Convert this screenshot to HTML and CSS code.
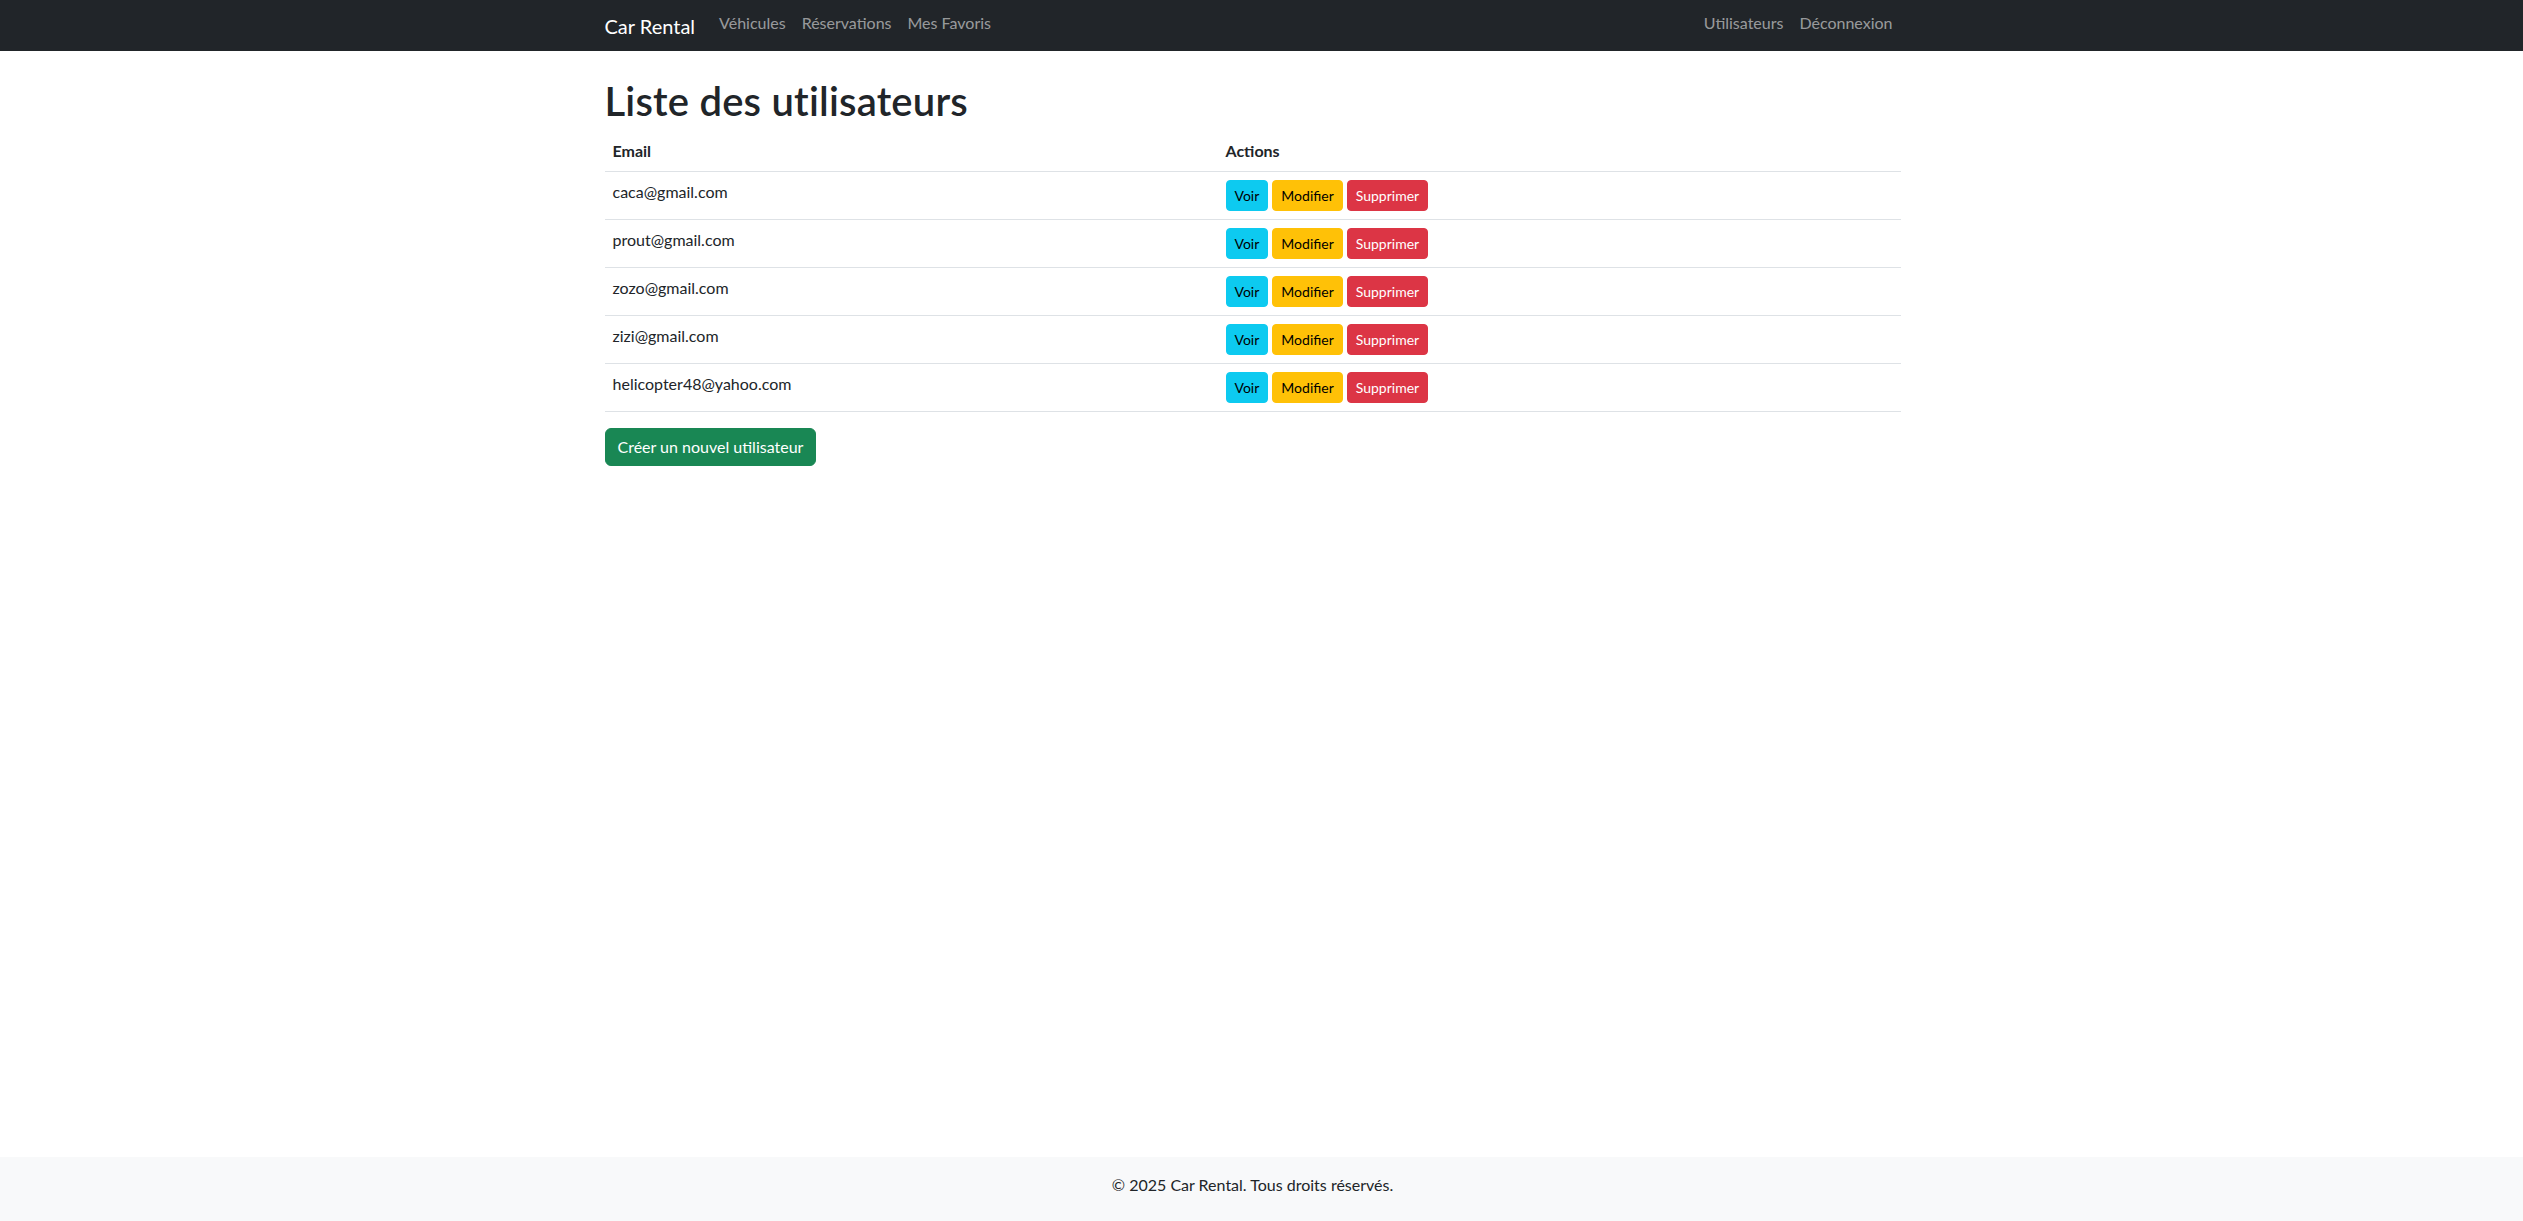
FILE: index.html
```html
<!DOCTYPE html>
<html lang="fr">
<head>
<meta charset="utf-8">
<title>Liste des utilisateurs</title>
<link rel="stylesheet" href="styles.css">
</head>
<body>
<nav class="navbar">
  <div class="container nav-inner">
    <a class="brand" href="#">Car Rental</a>
    <ul class="nav-list">
      <li><a class="nav-link" href="#">Véhicules</a></li>
      <li><a class="nav-link" href="#">Réservations</a></li>
      <li><a class="nav-link" href="#">Mes Favoris</a></li>
    </ul>
    <ul class="nav-list nav-right">
      <li><a class="nav-link" href="#">Utilisateurs</a></li>
      <li><a class="nav-link" href="#">Déconnexion</a></li>
    </ul>
  </div>
</nav>

<main class="container main">
  <h1 class="title">Liste des utilisateurs</h1>
  <table class="table">
    <thead>
      <tr><th class="col-email">Email</th><th>Actions</th></tr>
    </thead>
    <tbody>
      <tr><td>caca@gmail.com</td><td><div class="actions"><a class="btn-sm info" href="#">Voir</a><a class="btn-sm warning" href="#">Modifier</a><a class="btn-sm danger" href="#">Supprimer</a></div></td></tr>
      <tr><td>prout@gmail.com</td><td><div class="actions"><a class="btn-sm info" href="#">Voir</a><a class="btn-sm warning" href="#">Modifier</a><a class="btn-sm danger" href="#">Supprimer</a></div></td></tr>
      <tr><td>zozo@gmail.com</td><td><div class="actions"><a class="btn-sm info" href="#">Voir</a><a class="btn-sm warning" href="#">Modifier</a><a class="btn-sm danger" href="#">Supprimer</a></div></td></tr>
      <tr><td>zizi@gmail.com</td><td><div class="actions"><a class="btn-sm info" href="#">Voir</a><a class="btn-sm warning" href="#">Modifier</a><a class="btn-sm danger" href="#">Supprimer</a></div></td></tr>
      <tr><td>helicopter48@yahoo.com</td><td><div class="actions"><a class="btn-sm info" href="#">Voir</a><a class="btn-sm warning" href="#">Modifier</a><a class="btn-sm danger" href="#">Supprimer</a></div></td></tr>
    </tbody>
  </table>
  <a class="btn success" href="#">Créer un nouvel utilisateur</a>
</main>

<footer class="footer">
  <div class="container footer-inner">
    <p>© 2025 Car Rental. Tous droits réservés.</p>
  </div>
</footer>
</body>
</html>
```

FILE: styles.css
```css
* { box-sizing: border-box; }

html, body { height: 100%; }

body {
  margin: 0;
  font-family: Lato, "Noto Sans", "Open Sans", sans-serif;
  font-size: 16px;
  line-height: 1.5;
  color: #212529;
  background: #fff;
  display: flex;
  flex-direction: column;
  min-height: 100vh;
}

a { text-decoration: none; }

.container {
  width: 1296px;
  margin-left: calc(50% - 657px);
}

/* Navbar */
.navbar {
  background: #212529;
  height: 51px;
  display: flex;
  align-items: center;
}

.nav-inner {
  display: flex;
  align-items: center;
}

.brand {
  color: #fff;
  font-size: 20px;
  line-height: 30px;
  margin-right: 16px;
  padding-top: 1px;
}

.nav-list {
  list-style: none;
  margin: 0;
  padding: 0;
  display: flex;
}

.nav-right { margin-left: auto; }

.nav-link {
  display: block;
  padding: 5px 8px 11px;
  color: rgba(255, 255, 255, 0.55);
}

/* Main */
.main {
  padding-top: 24px;
  flex: 0 0 auto;
}

.title {
  font-size: 40px;
  font-weight: 600;
  line-height: 1.2;
  letter-spacing: 0.2px;
  padding-top: 2px;
  margin: 0 0 6px;
}

.table {
  width: 100%;
  border-collapse: collapse;
  margin-bottom: 16px;
}

.table th,
.table td {
  padding: 8px;
  text-align: left;
  vertical-align: top;
  border-bottom: 1px solid #dee2e6;
}

.table th { font-weight: 700; }

.col-email { width: 613px; }

.actions {
  display: flex;
  gap: 4px;
}

.btn-sm {
  display: inline-block;
  font-size: 14px;
  line-height: 21px;
  padding: 4px 8px;
  border: 1px solid transparent;
  border-radius: 4px;
}

.info { background: #0dcaf0; border-color: #0dcaf0; color: #000; }
.warning { background: #ffc107; border-color: #ffc107; color: #000; }
.danger { background: #dc3545; border-color: #dc3545; color: #fff; }

.btn {
  display: inline-block;
  font-size: 16px;
  line-height: 24px;
  padding: 6px 12px;
  border: 1px solid transparent;
  border-radius: 6px;
}

.success { background: #198754; border-color: #198754; color: #fff; }

/* Footer */
.footer {
  margin-top: auto;
  background: #f8f9fa;
  padding-top: 16px;
}

.footer-inner { text-align: center; }

.footer p { margin: 0 0 24px; }
```
